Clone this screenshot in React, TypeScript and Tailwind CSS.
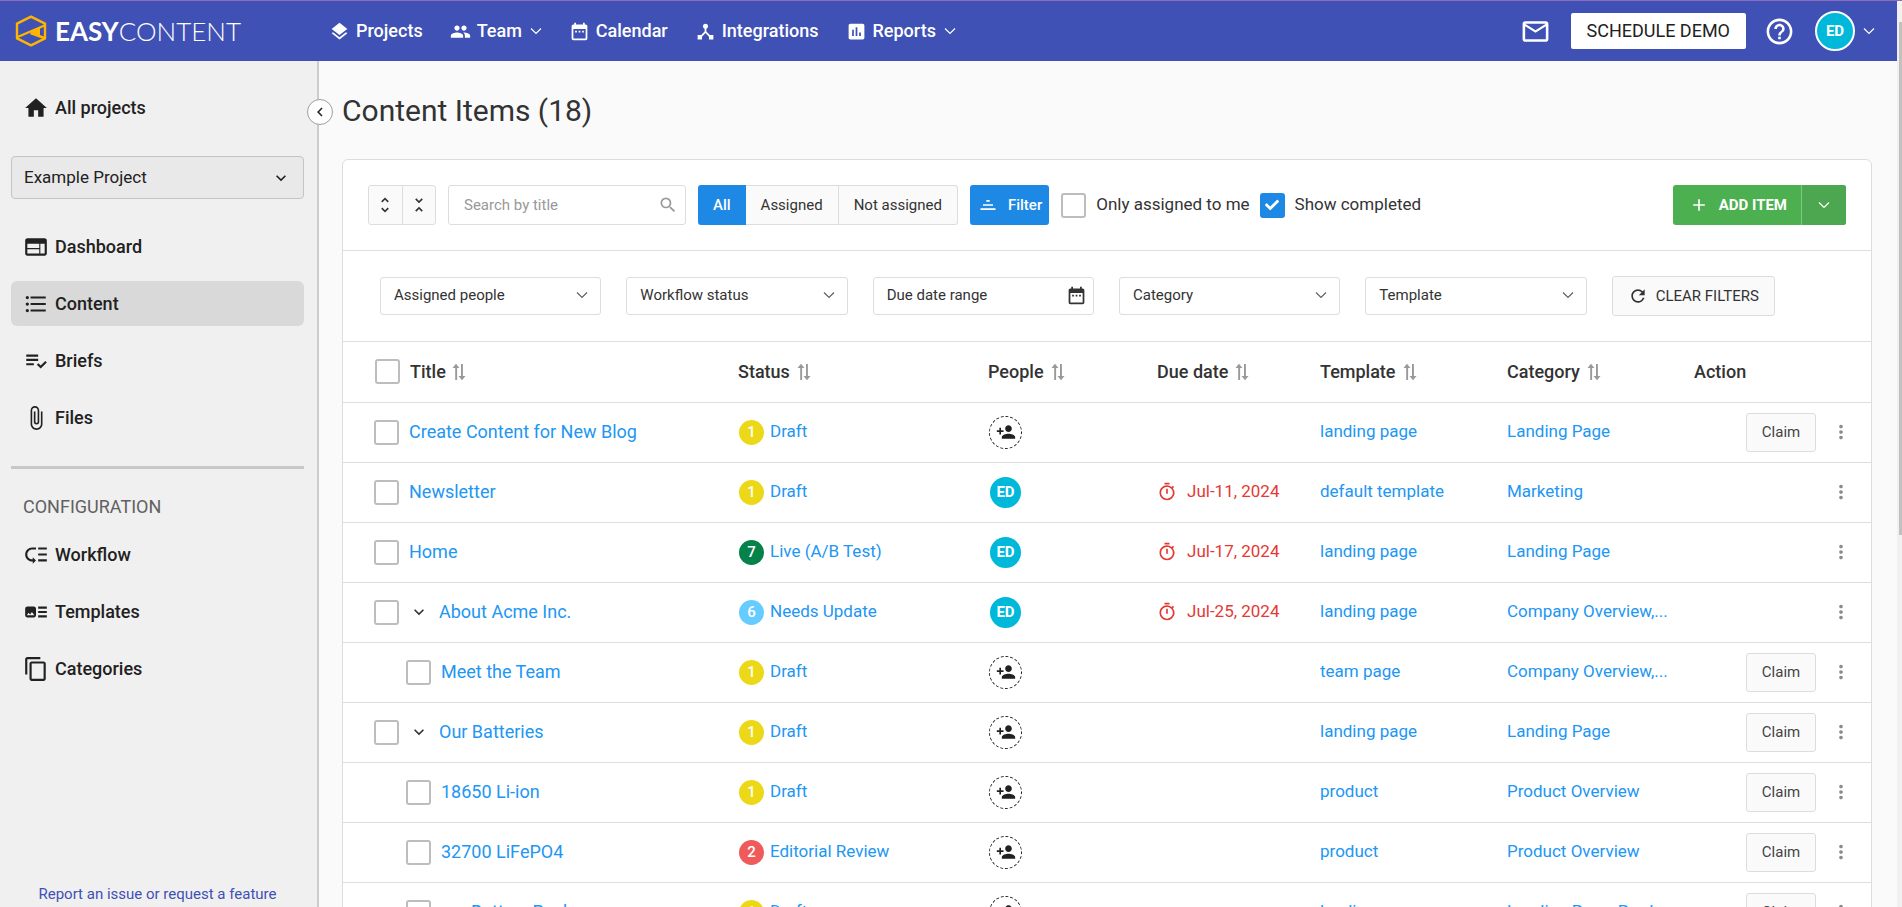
import type { ReactNode } from "react";
import type { IconType } from "react-icons";
import { FaCheck } from "react-icons/fa";
import {
  MdAdd,
  MdArtTrack,
  MdAssessment,
  MdAttachFile,
  MdChevronLeft,
  MdContentCopy,
  MdDateRange,
  MdDeviceHub,
  MdExpandMore,
  MdFilterList,
  MdFormatListBulleted,
  MdHelpOutline,
  MdHome,
  MdLayers,
  MdLowPriority,
  MdMailOutline,
  MdMoreVert,
  MdOutlineTimer,
  MdPeople,
  MdPersonAdd,
  MdPlaylistAddCheck,
  MdRefresh,
  MdSearch,
  MdUnfoldLess,
  MdUnfoldMore,
  MdWeb,
} from "react-icons/md";

interface Item {
  title: string;
  status: keyof typeof statuses;
  owner?: string;
  due?: string;
  template: string;
  category: string;
  claim?: boolean;
  child?: boolean;
  expandable?: boolean;
}

const statuses = {
  Draft: { step: 1, color: "bg-[#ecd817]" },
  "Editorial Review": { step: 2, color: "bg-[#ef5b5b]" },
  "Needs Update": { step: 6, color: "bg-[#66ccff]" },
  "Live (A/B Test)": { step: 7, color: "bg-[#04824a]" },
};

const items: Item[] = [
  { title: "Create Content for New Blog", status: "Draft", template: "landing page", category: "Landing Page", claim: true },
  { title: "Newsletter", status: "Draft", owner: "ED", due: "Jul-11, 2024", template: "default template", category: "Marketing" },
  { title: "Home", status: "Live (A/B Test)", owner: "ED", due: "Jul-17, 2024", template: "landing page", category: "Landing Page" },
  { title: "About Acme Inc.", status: "Needs Update", owner: "ED", due: "Jul-25, 2024", template: "landing page", category: "Company Overview,...", expandable: true },
  { title: "Meet the Team", status: "Draft", template: "team page", category: "Company Overview,...", claim: true, child: true },
  { title: "Our Batteries", status: "Draft", template: "landing page", category: "Landing Page", claim: true, expandable: true },
  { title: "18650 Li-ion", status: "Draft", template: "product", category: "Product Overview", claim: true, child: true },
  { title: "32700 LiFePO4", status: "Editorial Review", template: "product", category: "Product Overview", claim: true, child: true },
  { title: "Battery Packs", status: "Draft", template: "landing page", category: "Landing Page, Prod...", claim: true, child: true, expandable: true },
];

const topNav: { label: string; icon: IconType; menu?: boolean }[] = [
  { label: "Projects", icon: MdLayers },
  { label: "Team", icon: MdPeople, menu: true },
  { label: "Calendar", icon: MdDateRange },
  { label: "Integrations", icon: MdDeviceHub },
  { label: "Reports", icon: MdAssessment, menu: true },
];

const projectNav = [
  { label: "Dashboard", icon: MdWeb },
  { label: "Content", icon: MdFormatListBulleted, active: true },
  { label: "Briefs", icon: MdPlaylistAddCheck },
  { label: "Files", icon: MdAttachFile },
];

const configNav = [
  { label: "Workflow", icon: MdLowPriority },
  { label: "Templates", icon: MdArtTrack },
  { label: "Categories", icon: MdContentCopy },
];

const columns = [
  { label: "Status", width: "w-[250px]" },
  { label: "People", width: "w-[169px]" },
  { label: "Due date", width: "w-[163px]" },
  { label: "Template", width: "w-[187px]" },
  { label: "Category", width: "w-[187px]" },
];

function ThinChevron({ className }: { className?: string }) {
  return (
    <svg viewBox="0 0 12 8" className={`h-2 w-3 shrink-0 ${className ?? ""}`} fill="none" stroke="currentColor" strokeWidth="1.2">
      <path d="M1 1.5 6 6.5 11 1.5" />
    </svg>
  );
}

function SortIcon() {
  return (
    <svg viewBox="0 0 14 18" className="h-[18px] w-[14px] text-[#999999]" fill="currentColor">
      <path d="M3.2 17V5H.5L4 .8 7.4 5H5.1v12zM9 1h1.9v12h2.6L10 17.2 6.5 13H9z" />
    </svg>
  );
}

function Checkbox({ label, checked }: { label: string; checked?: boolean }) {
  return (
    <span className="relative inline-flex shrink-0">
      <input
        type="checkbox"
        aria-label={label}
        defaultChecked={checked}
        className="peer size-[25px] appearance-none rounded-[3px] border-2 border-[#bdbdbd] bg-white checked:border-[#1e88e5] checked:bg-[#1e88e5]"
      />
      <FaCheck className="pointer-events-none absolute inset-0 m-auto hidden size-[14px] text-white peer-checked:block" />
    </span>
  );
}

function Logo() {
  return (
    <a href="#" className="flex w-[315px] shrink-0 items-center gap-2 pl-[15px] font-['Lato',sans-serif] text-[26px] text-white">
      <svg viewBox="0 0 32 32" className="size-8" fill="none" stroke="#ffb400" strokeWidth="2.4" strokeLinejoin="round">
        <path d="M16 1.6 30 8.6v14.8l-14 7L2 23.4V8.6z" />
        <path d="M2.5 22 29.5 10.5" />
        <path d="m15.5 18 14 5" />
        <path d="m15 16.6 10-4.2v9z" fill="#ffb400" stroke="none" />
      </svg>
      <span>
        <span className="font-bold">EASY</span>
        <span className="font-light">CONTENT</span>
      </span>
    </a>
  );
}

function Header() {
  return (
    <header className="flex h-[60px] shrink-0 items-center bg-[#3f51b5] pr-[22px] text-white">
      <Logo />
      <nav className="flex flex-1 items-center gap-[27px] pl-[14px] text-[18px] leading-6 font-medium">
        {topNav.map(({ label, icon: Icon, menu }) => (
          <a key={label} href="#" className="flex items-center gap-[6px]">
            <Icon className="size-[21px]" />
            <span>{label}</span>
            {menu && <ThinChevron className="ml-[2px]" />}
          </a>
        ))}
      </nav>
      <button type="button" aria-label="Messages">
        <MdMailOutline className="size-[31px]" />
      </button>
      <button type="button" className="ml-5 h-9 rounded-[2px] bg-white px-4 text-[18px] leading-6 text-[#212121]">
        SCHEDULE DEMO
      </button>
      <button type="button" aria-label="Help" className="ml-[18px]">
        <MdHelpOutline className="size-[31px]" />
      </button>
      <button type="button" className="ml-5 flex items-center gap-2">
        <span className="flex size-10 items-center justify-center rounded-full border-2 border-white bg-[#00b8d9] text-[15px] font-bold">ED</span>
        <ThinChevron />
      </button>
    </header>
  );
}

function SideLink({ label, icon: Icon, active }: { label: string; icon: IconType; active?: boolean }) {
  return (
    <a
      href="#"
      className={`flex h-[45px] items-center gap-[6px] rounded-md pl-3 text-[18px] leading-6 font-medium ${active ? "bg-[#d9d9d9]" : ""}`}
    >
      <Icon className="size-[26px]" />
      {label}
    </a>
  );
}

function Sidebar() {
  return (
    <aside className="relative flex w-[319px] shrink-0 flex-col border-r-2 border-[#cccccc] bg-[#f0f0f0] px-[11px] pt-6 pr-[13px] text-[#212121]">
      <SideLink label="All projects" icon={MdHome} />
      <div className="relative mt-[26px]">
        <select
          aria-label="Project"
          className="h-[43px] w-full appearance-none rounded border border-[#c4c4c4] bg-[#e9e9e9] px-3 text-[17px]"
        >
          <option>Example Project</option>
        </select>
        <MdExpandMore className="pointer-events-none absolute top-3 right-[13px] size-5" />
      </div>
      <nav className="mt-[25px] flex flex-col gap-3">
        {projectNav.map((link) => (
          <SideLink key={link.label} {...link} />
        ))}
      </nav>
      <hr className="mt-[26px] border-t-[3px] border-[#c8c8c8]" />
      <h2 className="mt-[26px] pl-3 text-[18px] leading-6 text-[#616161]">CONFIGURATION</h2>
      <nav className="mt-[13px] flex flex-col gap-3">
        {configNav.map((link) => (
          <SideLink key={link.label} {...link} />
        ))}
      </nav>
      <a href="#" className="mt-auto pb-[2px] text-center text-[15px] text-[#3f51b5]">
        Report an issue or request a feature
      </a>
      <button
        type="button"
        aria-label="Collapse sidebar"
        className="absolute top-[38px] -right-4 z-10 flex size-[26px] items-center justify-center rounded-full border border-[#9e9e9e] bg-white"
      >
        <MdChevronLeft className="size-[18px]" />
      </button>
    </aside>
  );
}

function Toolbar() {
  return (
    <div className="flex items-center border-b border-[#dddddd] px-[25px] py-[25px] text-[15px] text-[#333333]">
      <div className="flex h-10 w-[68px] divide-x divide-[#dddddd] rounded-[3px] border border-[#dddddd] bg-[#fafafa]">
        <button type="button" aria-label="Expand all" className="flex flex-1 items-center justify-center">
          <MdUnfoldMore className="size-5" />
        </button>
        <button type="button" aria-label="Collapse all" className="flex flex-1 items-center justify-center">
          <MdUnfoldLess className="size-5" />
        </button>
      </div>
      <div className="relative ml-3 w-[238px]">
        <input
          type="search"
          aria-label="Search by title"
          placeholder="Search by title"
          className="h-10 w-full rounded-[3px] border border-[#dddddd] pr-9 pl-[15px] placeholder:text-[#999999]"
        />
        <MdSearch className="absolute top-[10px] right-2 size-5 text-[#999999]" />
      </div>
      <div className="ml-3 flex h-10">
        <button type="button" className="rounded-l-[3px] bg-[#1e88e5] px-[15px] font-medium text-white">
          All
        </button>
        <button type="button" className="border-y border-r border-[#dddddd] bg-[#fafafa] px-[15px]">
          Assigned
        </button>
        <button type="button" className="rounded-r-[3px] border-y border-r border-[#dddddd] bg-[#fafafa] px-[15px]">
          Not assigned
        </button>
      </div>
      <button type="button" className="ml-3 flex h-10 items-center gap-[10px] rounded-[3px] bg-[#1e88e5] pr-[7px] pl-2 font-medium text-white">
        <MdFilterList className="size-5 rotate-180" />
        Filter
      </button>
      <label className="ml-3 flex items-center gap-[10px] text-[17px]">
        <Checkbox label="Only assigned to me" />
        Only assigned to me
      </label>
      <label className="ml-[10px] flex items-center gap-[10px] text-[17px]">
        <Checkbox label="Show completed" checked />
        Show completed
      </label>
      <div className="ml-auto flex h-10 divide-x divide-[#81c784] overflow-hidden rounded-[3px] bg-[#4caf50] font-bold text-white">
        <button type="button" className="flex items-center gap-[10px] pr-[14px] pl-4">
          <MdAdd className="size-5" />
          ADD ITEM
        </button>
        <button type="button" aria-label="More add options" className="flex w-[44px] items-center justify-center bg-[#4ca750]">
          <ThinChevron />
        </button>
      </div>
    </div>
  );
}

function FilterSelect({ label }: { label: string }) {
  return (
    <div className="relative">
      <select
        aria-label={label}
        className="h-[38px] w-full appearance-none rounded-[3px] border border-[#dddddd] bg-white px-[13px] pb-[2px] text-[15px]"
      >
        <option>{label}</option>
      </select>
      <ThinChevron className="pointer-events-none absolute top-[14px] right-[13px] text-[#616161]" />
    </div>
  );
}

function Filters() {
  return (
    <div className="grid grid-cols-6 items-center gap-x-[25px] border-b border-[#dddddd] py-[25px] pr-[38px] pl-[37px] text-[15px] text-[#333333]">
      <FilterSelect label="Assigned people" />
      <FilterSelect label="Workflow status" />
      <div className="relative">
        <input
          type="text"
          aria-label="Due date range"
          placeholder="Due date range"
          className="h-[38px] w-full rounded-[3px] border border-[#dddddd] px-[13px] pb-[2px] placeholder:text-[#333333]"
        />
        <MdDateRange className="absolute top-2 right-[7px] size-[21px]" />
      </div>
      <FilterSelect label="Category" />
      <FilterSelect label="Template" />
      <button
        type="button"
        className="flex h-10 items-center gap-2 justify-self-start rounded-[3px] border border-[#dddddd] bg-[#fafafa] px-[15px]"
      >
        <MdRefresh className="size-5" />
        CLEAR FILTERS
      </button>
    </div>
  );
}

function TableLink({ children }: { children: ReactNode }) {
  return (
    <a href="#" className="whitespace-nowrap">
      {children}
    </a>
  );
}

function ItemRow({ item }: { item: Item }) {
  const status = statuses[item.status];
  return (
    <tr className="h-[60px] border-b border-[#dddddd]">
      <td className={item.child ? "pl-[63px]" : "pl-[31px]"}>
        <div className="flex items-center text-[18px] leading-6">
          <Checkbox label={`Select ${item.title}`} />
          {item.expandable && (
            <button type="button" aria-label={`Toggle ${item.title}`} className="ml-[10px] text-[#333333]">
              <MdExpandMore className="size-5" />
            </button>
          )}
          <span className="ml-[10px]">
            <TableLink>{item.title}</TableLink>
          </span>
        </div>
      </td>
      <td>
        <div className="flex items-center gap-[6px] pl-px">
          <span className={`flex size-[25px] items-center justify-center rounded-full text-[15px] font-medium text-white ${status.color}`}>
            {status.step}
          </span>
          <TableLink>{item.status}</TableLink>
        </div>
      </td>
      <td>
        {item.owner ? (
          <span className="ml-[2px] flex size-[31px] items-center justify-center rounded-full bg-[#00b8d9] text-[15px] font-bold text-white">
            {item.owner}
          </span>
        ) : (
          <button
            type="button"
            aria-label="Assign person"
            className="ml-px flex size-[33px] items-center justify-center rounded-full border border-dashed border-[#212121] text-[#212121]"
          >
            <MdPersonAdd className="size-5" />
          </button>
        )}
      </td>
      <td>
        {item.due && (
          <span className="flex items-center gap-[10px] text-[#e53935]">
            <MdOutlineTimer className="size-5" />
            {item.due}
          </span>
        )}
      </td>
      <td>
        <TableLink>{item.template}</TableLink>
      </td>
      <td>
        <TableLink>{item.category}</TableLink>
      </td>
      <td>
        <div className="flex items-center justify-end gap-[14px] pr-[19px]">
          {item.claim && (
            <button type="button" className="h-[39px] w-[70px] rounded-[3px] border border-[#dddddd] bg-[#fafafa] text-[15px] text-[#444444]">
              Claim
            </button>
          )}
          <button type="button" aria-label="More actions" className="text-[#8a8a8a]">
            <MdMoreVert className="size-[22px]" />
          </button>
        </div>
      </td>
    </tr>
  );
}

function ItemsTable() {
  return (
    <table className="w-full table-fixed border-collapse text-left text-[17px] text-[#2196f3]">
      <thead>
        <tr className="h-[60px] border-b border-[#dddddd] text-[18px] leading-6 text-[#333333]">
          <th className="pl-8 font-medium">
            <div className="flex items-center gap-[10px]">
              <Checkbox label="Select all items" />
              <button type="button" className="flex items-center gap-[6px]">
                Title
                <SortIcon />
              </button>
            </div>
          </th>
          {columns.map(({ label, width }) => (
            <th key={label} className={`font-medium ${width}`}>
              <button type="button" className="flex items-center gap-[7px]">
                {label}
                <SortIcon />
              </button>
            </th>
          ))}
          <th className="w-[177px] font-medium">Action</th>
        </tr>
      </thead>
      <tbody>
        {items.map((item) => (
          <ItemRow key={item.title} item={item} />
        ))}
      </tbody>
    </table>
  );
}

export default function App() {
  return (
    <div className="flex h-screen flex-col overflow-hidden border-t border-[#8e6bb8] bg-[#fafafa] font-['Roboto',sans-serif]">
      <div className="flex min-h-0 flex-1">
        <div className="flex min-w-0 flex-1 flex-col">
          <Header />
          <div className="flex min-h-0 flex-1">
            <Sidebar />
            <main className="min-w-0 flex-1 overflow-hidden pr-[25px] pl-[23px]">
              <h1 className="mt-[30px] text-[30px] leading-10 text-[#333333]">Content Items (18)</h1>
              <section className="mt-7 rounded-md border border-[#dddddd] bg-white">
                <Toolbar />
                <Filters />
                <ItemsTable />
              </section>
            </main>
          </div>
        </div>
        {/* Scroll track */}
        <div className="w-[5px] bg-[#f1f1f1] pt-[21px] pl-[2px]">
          <div className="h-[58%] bg-[#c1c1c1]" />
        </div>
      </div>
    </div>
  );
}
